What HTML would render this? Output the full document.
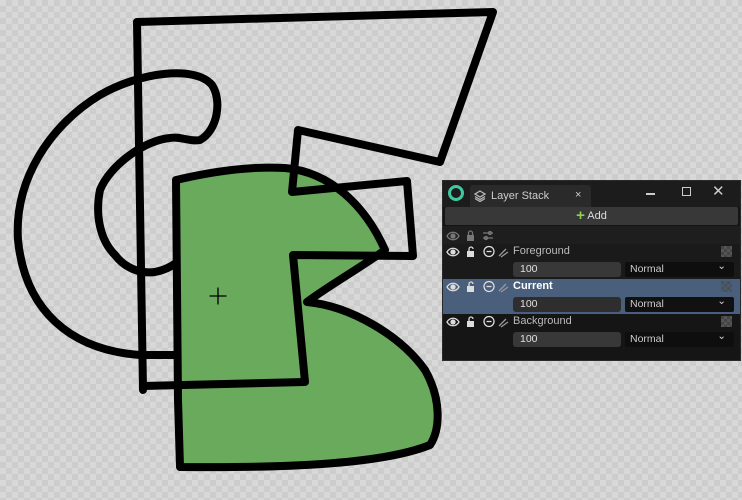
<!DOCTYPE html>
<html><head><meta charset="utf-8"><style>
*{margin:0;padding:0;box-sizing:border-box}
body{width:742px;height:500px;overflow:hidden;position:relative;font-family:"Liberation Sans",sans-serif;
background-color:#d8d8d8;
background-image:linear-gradient(45deg,#cdcdcd 25%,transparent 25%,transparent 75%,#cdcdcd 75%),linear-gradient(45deg,#cdcdcd 25%,transparent 25%,transparent 75%,#cdcdcd 75%);
background-size:12px 12px;background-position:0 0,6px 6px;}
svg.d{position:absolute;left:0;top:0}
.p{position:absolute;left:442px;top:180px;width:299px;height:181px;background:#151515;border:1px solid #2a2a2a;color:#ddd;font-size:11px}
.abs{position:absolute}
.row{position:absolute;left:0;width:297px;height:35px}
.in{position:absolute;left:70px;top:18px;width:108px;height:15px;background:#383838;border-radius:3px;padding-left:7px;line-height:15px;color:#e0e0e0;font-size:10.5px}
.sel{position:absolute;left:182px;top:18px;width:109px;height:15px;background:#0e0e0e;border-radius:2px;padding-left:5px;line-height:15px;color:#ccc;font-size:10.5px}
.lbl{position:absolute;left:70px;top:1px;font-size:11px;color:#bbb}
.ck{position:absolute;left:278px;top:2px;width:11px;height:11px;background:#444;background-image:linear-gradient(45deg,#555 25%,transparent 25%,transparent 75%,#555 75%),linear-gradient(45deg,#555 25%,transparent 25%,transparent 75%,#555 75%);background-size:6px 6px;background-position:0 0,3px 3px}
.ic{position:absolute;left:0;top:0}
</style></head><body>
<svg class="d" width="742" height="500" viewBox="0 0 742 500" fill="none" stroke="#000" stroke-width="8" stroke-linejoin="round" stroke-linecap="round">
<path d="M177,355 L140,355 C70,350 25,310 18,240 C14,180 50,125 100,95 C140,72 195,65 212,85 C222,100 218,130 200,140 C190,142 180,136 170,138 C145,140 110,165 100,190 C95,215 100,240 115,255 C125,268 140,274 155,272 C165,270 172,266 176,263"/>
<path d="M137,22 L143,390"/>
<path fill="#6aaa5c" d="M176,180 C210,172 250,166 285,168 C330,172 365,205 385,250 C360,268 330,285 307,302 C350,306 400,335 425,370 C442,400 440,430 430,445 C380,465 280,468 180,467 L178,400 Z"/>
<path d="M137,22 L493,12 L440,162 L298,130 L292,192 L407,181 L413,256 L293,255 L305,382 L143,386"/>
<path d="M218,288 v16 M210,296 h16" stroke-width="1.3"/>
</svg>
<svg width="0" height="0" style="position:absolute"><defs>
<g id="icons" fill="none" stroke="#ddd" stroke-width="1.3">
<path d="M4,8 C7,3 13,3 16,8 C13,13 7,13 4,8Z"/><circle cx="10" cy="8" r="2" fill="#ddd"/>
<rect x="24" y="7" width="7" height="6" fill="#ddd" stroke="none"/><path d="M26,7 V5 A2,2 0 0 1 30,5"/>
<circle cx="46" cy="7.5" r="5"/><path d="M43.5,7.5 h5"/>
<path d="M56,12 L63,5 M58,13 L65,8" stroke="#999"/>
</g></defs></svg>
<div class="p">
 <div class="abs" style="left:0;top:0;width:297px;height:26px;background:#1c1c1c"></div>
 <div class="abs" style="left:5px;top:4px;width:16px;height:16px;border:3px solid #3ec9a0;border-radius:50%"></div>
 <div class="abs" style="left:27px;top:4px;width:121px;height:22px;background:#2a2a2a;border-radius:3px 3px 0 0"></div>
 <svg class="abs" style="left:31px;top:9px" width="12" height="12" viewBox="0 0 12 12" fill="none" stroke="#bbb" stroke-width="1.3"><path d="M6,1 L11,4 L6,7 L1,4Z M1,6.5 L6,9.5 L11,6.5 M1,8.5 L6,11.5 L11,8.5"/></svg>
 <div class="abs" style="left:48px;top:9px;font-size:11px;color:#ccc">Layer Stack</div>
 <div class="abs" style="left:132px;top:8px;font-size:11px;color:#ccc">×</div>
 <div class="abs" style="left:203px;top:12px;width:9px;height:1.5px;background:#ccc"></div>
 <div class="abs" style="left:239px;top:6px;width:9px;height:9px;border:1.3px solid #ccc"></div>
 <div class="abs" style="left:269px;top:1px;font-size:15px;color:#ccc">✕</div>
 <div class="abs" style="left:2px;top:26px;width:293px;height:18px;background:#383838;border-radius:2px;text-align:center;line-height:18px;font-size:11px;color:#ddd"><span style="color:#8fd14f;font-size:15px;font-weight:bold;vertical-align:-1px">+</span> Add</div>
 <div class="abs" style="left:0;top:45px;width:297px;height:18px;background:#1e1e1e"></div>
 <svg class="abs" style="left:0;top:47px" width="60" height="16" fill="none" stroke="#777" stroke-width="1.3"><path d="M4,8 C7,3 13,3 16,8 C13,13 7,13 4,8Z"/><circle cx="10" cy="8" r="2" fill="#777"/><rect x="24" y="7" width="7" height="6" fill="#777" stroke="none"/><path d="M25.5,7 V5 A2,2 0 0 1 29.5,5 V7"/><path d="M40,5 h10 M40,10 h10"/><circle cx="47" cy="5" r="1.5"/><circle cx="43" cy="10" r="1.5"/></svg>
 <div class="row" style="top:63px;background:#1a1a1a">
  <svg class="ic" width="70" height="16"><use href="#icons"/></svg>
  <div class="lbl">Foreground</div><div class="ck"></div>
  <div class="in">100</div><div class="sel">Normal<span style="position:absolute;right:8px;top:-3px">⌄</span></div>
 </div>
 <div class="row" style="top:98px;background:#4a5f7c">
  <svg class="ic" width="70" height="16"><use href="#icons"/></svg>
  <div class="lbl" style="color:#fff;font-weight:bold">Current</div><div class="ck" style="opacity:.5"></div>
  <div class="in" style="background:#2e2e2e">100</div><div class="sel" style="background:#111">Normal<span style="position:absolute;right:8px;top:-3px">⌄</span></div>
 </div>
 <div class="row" style="top:133px;background:#151515">
  <svg class="ic" width="70" height="16"><use href="#icons"/></svg>
  <div class="lbl">Background</div><div class="ck"></div>
  <div class="in">100</div><div class="sel">Normal<span style="position:absolute;right:8px;top:-3px">⌄</span></div>
 </div>
</div>
</body></html>
